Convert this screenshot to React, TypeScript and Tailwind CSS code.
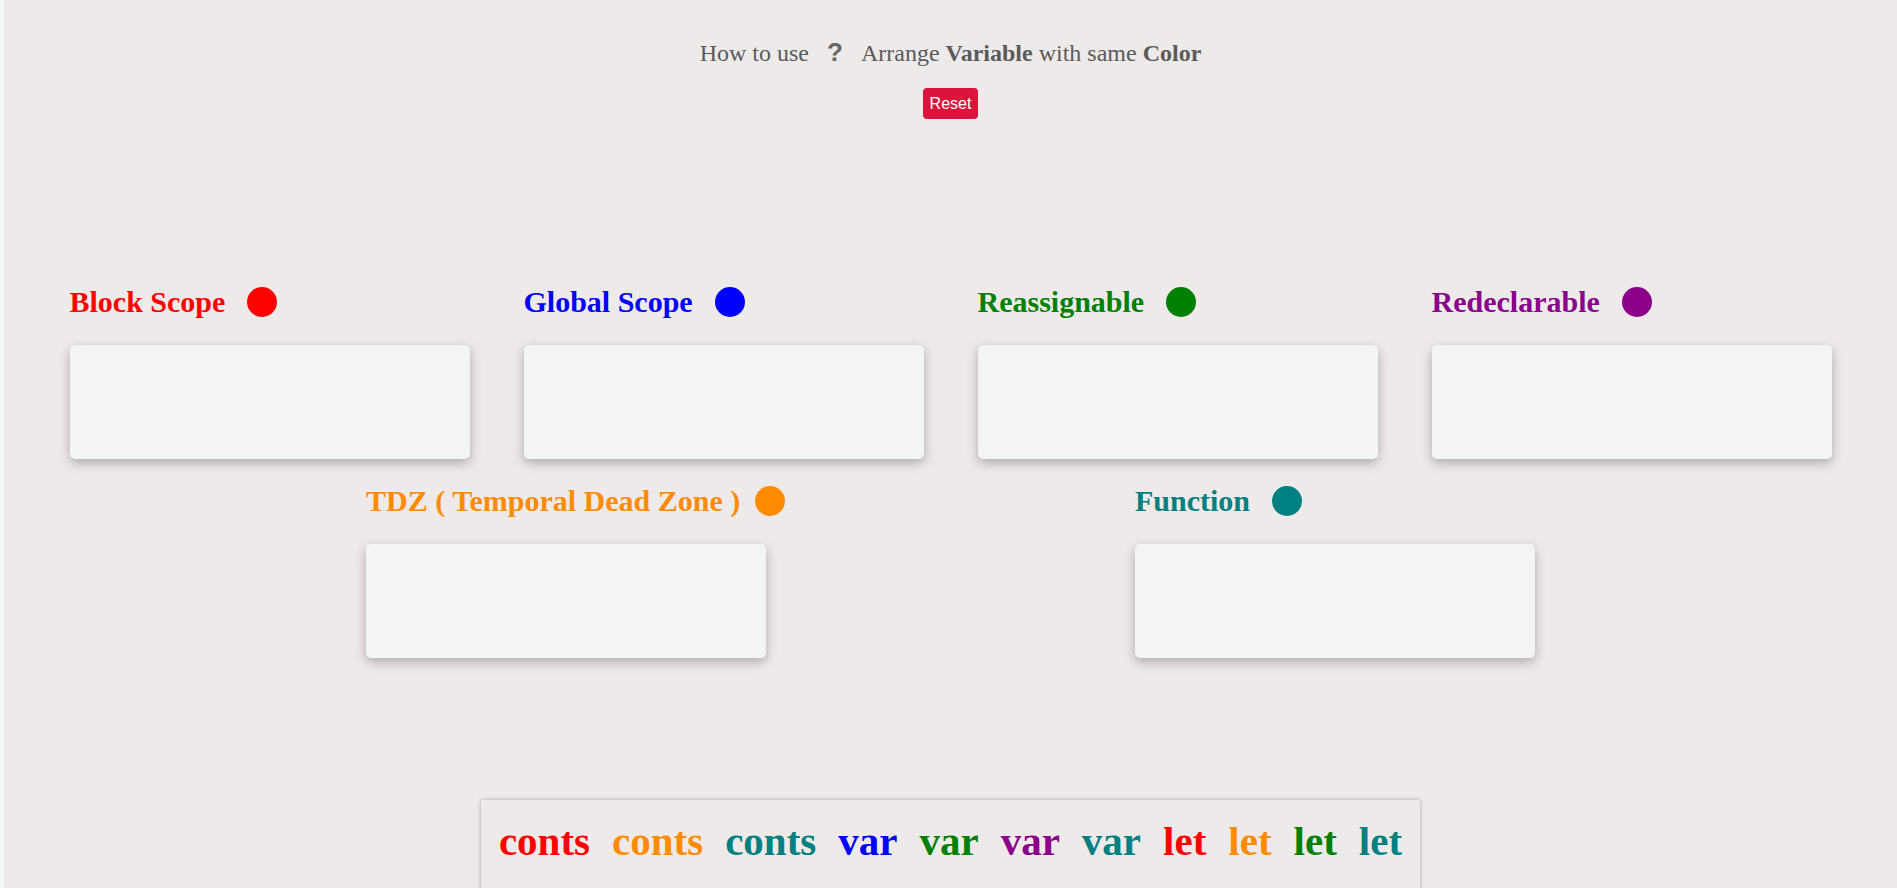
const scopes = [
  { label: "Block Scope", color: "#ff0000" },
  { label: "Global Scope", color: "#0000ff" },
  { label: "Reassignable", color: "#008000" },
  { label: "Redeclarable", color: "#8b008b" },
];

const extra = [
  { label: "TDZ ( Temporal Dead Zone )", color: "#ff8c00", gap: "gap-[15px]" },
  { label: "Function", color: "#008080", gap: "gap-[22px]" },
];

const words = [
  { text: "conts", color: "#ff0000" },
  { text: "conts", color: "#ff8c00" },
  { text: "conts", color: "#008080" },
  { text: "var", color: "#0000ff" },
  { text: "var", color: "#008000" },
  { text: "var", color: "#8b008b" },
  { text: "var", color: "#008080" },
  { text: "let", color: "#ff0000" },
  { text: "let", color: "#ff8c00" },
  { text: "let", color: "#008000" },
  { text: "let", color: "#008080" },
];

function DropZone({ label, color, gap = "gap-[22px]" }: { label: string; color: string; gap?: string }) {
  return (
    <div className="flex flex-col w-[400px]">
      <div className={`flex items-center h-[35px] ${gap}`}>
        <h2 className="text-[30px] font-bold leading-[35px] whitespace-nowrap" style={{ color }}>
          {label}
        </h2>
        <span className="w-[30px] h-[30px] rounded-full shrink-0" style={{ backgroundColor: color }} />
      </div>
      <div className="mt-[26px] h-[114px] bg-[#f4f4f4] rounded-[5px] shadow-[0_4px_12px_rgba(0,0,0,0.28)]" />
    </div>
  );
}

export default function App() {
  return (
    <div className="min-h-screen bg-[#eeeae9] border-l-4 border-[#f6f6f6] font-['Liberation_Serif',serif] flex flex-col items-center">
      <p className="mt-[38px] text-[24px] leading-[28px] text-[#5a5a5a]">
        How to use
        <span className="mx-[18px] font-['Liberation_Sans',sans-serif] font-bold text-[26px] text-[#666]">?</span>
        Arrange <b>Variable</b> with same <b>Color</b>
      </p>
      <button className="mt-[21px] h-[31px] px-[7px] rounded-[4px] bg-[#dc143c] text-white text-[16px] font-['Liberation_Sans',sans-serif]">
        Reset
      </button>

      <div className="mt-[165px] flex gap-[54px]">
        {scopes.map((s) => (
          <DropZone key={s.label} label={s.label} color={s.color} />
        ))}
      </div>
      <div className="mt-[24px] flex gap-[369px]">
        {extra.map((s) => (
          <DropZone key={s.label} label={s.label} color={s.color} gap={s.gap} />
        ))}
      </div>

      <div className="mt-[142px] w-[939px] flex justify-center gap-[22px] pt-[18px] pb-[30px] bg-[#eeeae9] shadow-[0_0_4px_rgba(0,0,0,0.3)]">
        {words.map((w, i) => (
          <span key={i} className="text-[41px] font-bold leading-[47px] cursor-grab" style={{ color: w.color }}>
            {w.text}
          </span>
        ))}
      </div>
    </div>
  );
}
